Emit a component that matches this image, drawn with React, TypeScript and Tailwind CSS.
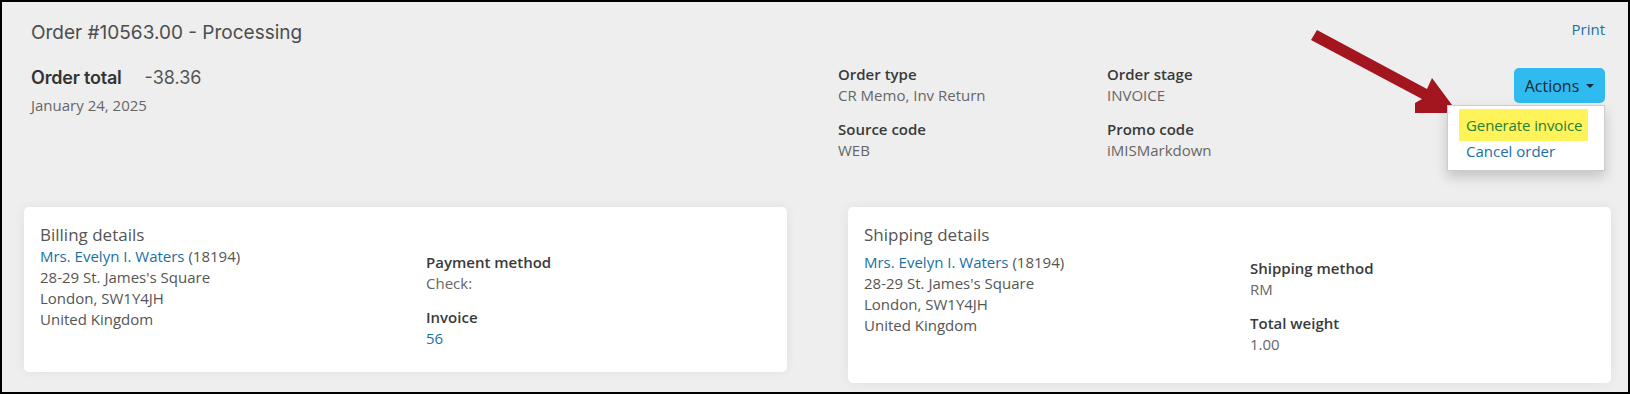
import { useState } from "react";

const sans = "font-['Open_Sans',_'Liberation_Sans',_sans-serif]";
const display = "font-['Inter',_'Liberation_Sans',_sans-serif]";

type Field = { label: string; value: string; link?: boolean };

const orderFields: Field[] = [
    { label: "Order type", value: "CR Memo, Inv Return" },
    { label: "Order stage", value: "INVOICE" },
    { label: "Source code", value: "WEB" },
    { label: "Promo code", value: "iMISMarkdown" },
];

function FieldBlock({ label, value, link }: Field) {
    return (
        <div>
            <div className="text-[15px] leading-[21px] font-semibold text-[#3a3a3a]">{label}</div>
            <div className={`text-[15px] leading-[21px] ${link ? "text-[#1b6fa3]" : "text-[#666]"}`}>{value}</div>
        </div>
    );
}

function Address() {
    return (
        <div className="text-[15px] leading-[21px] text-[#555]">
            <div>
                <a className="text-[#1b6fa3]">Mrs. Evelyn I. Waters</a> (18194)
            </div>
            <div>28-29 St. James's Square</div>
            <div>London, SW1Y4JH</div>
            <div>United Kingdom</div>
        </div>
    );
}

function DetailsCard({ title, fields, height, shift }: { title: string; fields: Field[]; height: string; shift: boolean }) {
    return (
        <div className={`w-[763px] ${height} bg-white rounded-[5px] shadow-[0_0_12px_rgba(0,0,0,0.06)] pt-[17px] pl-[16px]`}>
            <div className="text-[17px] leading-[22px] text-[#555]">{title}</div>
            <div className={`grid grid-cols-[386px_1fr] ${shift ? "mt-[6px]" : ""}`}>
                <Address />
                <div className="mt-[6px] flex flex-col gap-[13px]">
                    {fields.map((f) => (
                        <FieldBlock key={f.label} {...f} />
                    ))}
                </div>
            </div>
        </div>
    );
}

function Arrow() {
    // red annotation arrow pointing at the menu item
    return (
        <svg className="absolute left-[-2px] top-[-2px] pointer-events-none" width="1630" height="394" viewBox="0 0 1630 394">
            <polygon
                fill="#a3161f"
                points="1317,30 1427,89 1432,78 1458,113 1415,113 1415,103 1422,99 1311,40"
            />
        </svg>
    );
}

export default function App() {
    const [open] = useState(true);

    return (
        <div className={`relative w-[1630px] h-[394px] border-2 border-black bg-[#eeeeee] overflow-hidden ${sans}`}>
            <div className="flex h-[205px] pt-[17px] pl-[29px] pr-[23px]">
                <div className="w-[807px]">
                    <div className={`${display} text-[19px] leading-[28px] text-[#4d4d4d]`}>Order #10563.00 - Processing</div>
                    <div className={`${display} mt-[18px] flex h-[24px] items-center text-[18px] text-[#333]`}>
                        <span className="font-semibold tracking-[-0.2px]">Order total</span>
                        <span className="ml-[23px] text-[#555]">-38.36</span>
                    </div>
                    <div className="mt-[6px] text-[15px] leading-[20px] text-[#666]">January 24, 2025</div>
                </div>

                <div className="mt-[45px] grid grid-cols-[269px_auto] gap-y-[13px] h-fit">
                    {orderFields.map((f) => (
                        <FieldBlock key={f.label} {...f} />
                    ))}
                </div>

                <div className="ml-auto flex flex-col items-end">
                    <a className="text-[15px] leading-[21px] text-[#1b6fa3]">Print</a>
                    <div className="relative mt-[28px]">
                        <button className="flex h-[35px] w-[91px] items-center justify-center gap-[7px] rounded-[5px] bg-[#2fbbef] text-[16px] font-medium text-[#1c2833]">
                            Actions
                            <span className="border-x-[4px] border-t-[4px] border-x-transparent border-t-[#1c2833]" />
                        </button>
                        {open && (
                            <div className="absolute right-0 top-[37px] z-10 w-[158px] border border-[#ccc] bg-white pt-[3px] pb-[8px] shadow-[0_6px_12px_rgba(0,0,0,0.18)]">
                                <div className="ml-[11px] flex h-[32px] w-[129px] items-center bg-[#fff35a] pl-[7px] text-[15px] tracking-[-0.1px] text-[#23803a]">
                                    Generate invoice
                                </div>
                                <div className="pl-[18px] text-[15px] leading-[21px] text-[#1b6fa3]">Cancel order</div>
                            </div>
                        )}
                    </div>
                </div>
            </div>

            <div className="flex items-start gap-[61px] pl-[22px]">
                <DetailsCard
                    title="Billing details"
                    height="h-[165px]"
                    shift={false}
                    fields={[
                        { label: "Payment method", value: "Check:" },
                        { label: "Invoice", value: "56", link: true },
                    ]}
                />
                <DetailsCard
                    title="Shipping details"
                    height="h-[176px]"
                    shift={true}
                    fields={[
                        { label: "Shipping method", value: "RM" },
                        { label: "Total weight", value: "1.00" },
                    ]}
                />
            </div>

            <Arrow />
        </div>
    );
}
